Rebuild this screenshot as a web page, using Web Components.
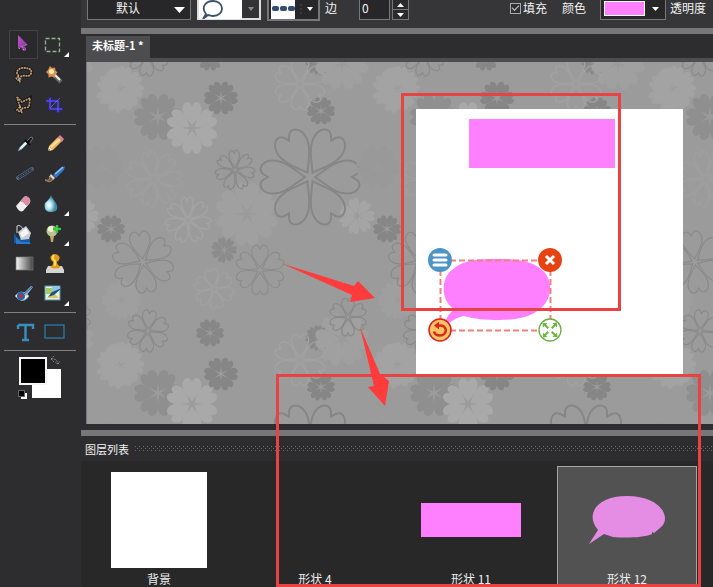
<!DOCTYPE html>
<html lang="zh-CN">
<head>
<meta charset="utf-8">
<title>未标题-1</title>
<style>
html, body { margin: 0; height: 100%; }
body { background: #2d2d2f; color: #f2f2f2; font: 12px/16px "Noto Sans CJK SC", "Noto Sans", sans-serif; overflow: hidden; }
</style>
</head>
<body>
<photo-editor></photo-editor>
<script>
function define(name, html) {
  customElements.define(name, class extends HTMLElement {
    constructor() {
      super();
      this.attachShadow({ mode: 'open' }).innerHTML = html;
    }
  });
}

const icons = {
  move: '<defs><linearGradient id="g" x2="1" y2="1"><stop stop-color="#c05acb"/><stop offset="1" stop-color="#7c2892"/></linearGradient></defs><path d="M4 0v14l3-2 2 4 3-1-2-4 4-1z" fill="url(#g)"/><path d="M5 14l3-3 2 4.500 2-1-2-4 3-1" fill="none" stroke="#d6bdd8" stroke-dasharray="1 1.500"/>',
  marquee: '<rect x="1.500" y="3.500" width="14" height="13" fill="none" stroke="#8fb48b" stroke-width="1.300" stroke-dasharray="4 2"/>',
  lasso: '<path d="M5 11C0 7 5 2 11 3c6 0 8 4 5 7-2 2-6 0-8 1-3 1 0 3-3 4-3 0-4-4 0-3l1 6" fill="none" stroke="#1d1611" stroke-width="3.500"/><path d="M5 11C0 7 5 2 11 3c6 0 8 4 5 7-2 2-6 0-8 1-3 1 0 3-3 4-3 0-4-4 0-3l1 6" fill="none" stroke="#b99c80" stroke-width="1.800" stroke-dasharray="2 .6"/>',
  wand: '<path d="M9 9l8 8" stroke="#666" stroke-width="4.500"/><path d="M9 8l7 7" stroke="#eee" stroke-width="2"/><path d="M6 1l2 2 3-.5.500 3 2 2-2 2-1 3-3-1-3 1v-3L2 7l2-2z" fill="#d8914c"/><circle cx="7.500" cy="6.500" r="2.500" fill="#ffe7ae"/>',
  poly: '<path d="M3 2l5 5 8-4-1 9-6 1-3 4-3-2 3-3zM6 11l2 7" fill="none" stroke="#1d1611" stroke-width="3.500"/><path d="M3 2l5 5 8-4-1 9-6 1-3 4-3-2 3-3zM6 11l2 7" fill="none" stroke="#bb9d82" stroke-width="1.700" stroke-dasharray="2 .8"/>',
  crop: '<path d="M6 2v12h13M2 6h12v12" fill="none" stroke="#3028be" stroke-width="2.500"/><path d="M6 3v11h12M2 6h12v11M16 3L6 13" fill="none" stroke="#6f69ee" stroke-width=".8"/>',
  dropper: '<path d="M4 17l2-4 6-6 2 2-6 6z" fill="#e9f5fd" stroke="#527b93" stroke-width=".7"/><path d="M12 8l5-5 2 1-4 6z" fill="#111" stroke="#999" stroke-width=".7"/><path d="M11 6l5 5" stroke="#090909" stroke-width="2"/>',
  pencil: '<path d="M4 17l1-5 9-9 4 4-9 9z" fill="#efb862"/><path d="M7 13l9-8" stroke="#ffe4a0" stroke-width="2"/><path d="M14 3l2-2 4 4-2 3z" fill="#df8294"/><path d="M4 17l1-4 3 3z" fill="#fff1d4"/><path d="M4 17l1-2 1 1z" fill="#111"/>',
  line: '<path d="M4 14l14-9" stroke="#526580" stroke-width="4" stroke-linecap="round"/><path d="M4 14l14-9" stroke="#1b2736" stroke-width="2.400"/><path d="M4 14l14-9" stroke="#aab6c7" stroke-width=".7" stroke-dasharray="1 1"/>',
  brush: '<path d="M9 11l8-7 4-2-1 4-8 8z" fill="#3374c8"/><path d="M11 10l8-7" stroke="#91c7fa" stroke-width="1.500"/><path d="M7 10l4 4-2 2-4-3z" fill="#ddd"/><path d="M1 16q5 1 5-4l3 3q-2 5-8 1" fill="#7d573d" stroke="#cfb08f" stroke-width=".6"/>',
  eraser: '<path d="M2 12l8-9q2-2 5 1l1 2q1 1-1 4l-6 7q-4 2-7-5" fill="#eee"/><path d="M6 8l4-5q3-2 6 2 1 2-1 5l-2 2z" fill="#d890a5"/><path d="M6 8q4 0 6 5" stroke="#fff" fill="none"/>',
  drop: '<defs><radialGradient id="g" cx=".35" cy=".6"><stop stop-color="#fff"/><stop offset=".45" stop-color="#b8e5f1"/><stop offset="1" stop-color="#3c8cab"/></radialGradient></defs><path d="M7 1q1 3 5 8 4 9-5 9-8 0-6-9 5-4 6-8" fill="url(#g)"/>',
  bucket: '<path d="M0 9l4 6 12-1v5H0z" fill="#1458ac"/><path d="M4 8l8-6 5 7-2 6-8 1z" fill="#c8cdd1"/><path d="M6 9l6-5 3 5-7 5z" fill="#f5f5f5"/><path d="M3 9V2q4-2 6 4" fill="none" stroke="#d3d8dd"/><path d="M2 13l5 5h8l2 2H2z" fill="#2879c7"/>',
  dodge: '<circle cx="8" cy="7" r="5.500" fill="#b9c492"/><circle cx="7" cy="5" r="3" fill="#f2f2cf"/><path d="M6 12h4l-1 6H7z" fill="#c8a868"/><path d="M13 1v8M9 5h8" stroke="#18a431" stroke-width="2.500"/><path d="M13 1v8M9 5h8" stroke="#54e858"/>',
  gradient: '<defs><linearGradient id="g"><stop stop-color="#f5f5f5"/><stop offset="1" stop-color="#444"/></linearGradient></defs><rect x="2" y="3" width="17" height="13" fill="url(#g)" stroke="#777" stroke-width=".7"/>',
  stamp: '<path d="M2 16l2-4h14l2 4v3H2z" fill="#d5d5d5"/><path d="M6 13q4-2 3-5-4-4-2-6 4-4 8 0 2 3-2 6 0 3 4 5-5 3-11 0" fill="#e39a17"/><path d="M10 1q-3 3 1 6v5" fill="none" stroke="#ffdb63" stroke-width="2"/>',
  redeye: '<path d="M1 12q6-8 14 0-6 9-14 0" fill="#edf3f6" stroke="#7ba2bf"/><circle cx="7" cy="12" r="4" fill="#1d65ad"/><circle cx="7" cy="12" r="2" fill="#d22626"/><path d="M9 10l8-8 2 1-7 9z" fill="#8db0d8"/><path d="M9 11l9-8" stroke="#355f95"/>',
  effect: '<rect x="1" y="2" width="15" height="14" fill="#e9f0dc" stroke="#4d95bf"/><path d="M2 4h7v6H2z" fill="#a9cb63"/><path d="M8 3h7v4H8z" fill="#8cc6e9"/><path d="M3 14l8-4 4 4z" fill="#e4c45d"/><path d="M4 13l4-5 10-4-8 7z" fill="#185583"/>',
  text: '<path d="M4 3h15v4M4 7V3M11.500 3v15M8 18h7" fill="none" stroke="#3b8fbe" stroke-width="2.400"/>',
  rect: '<rect x="1" y="3" width="19" height="13" fill="none" stroke="#277da8" stroke-width="1.300"/>'
};

customElements.define('tool-button', class extends HTMLElement {
  connectedCallback() {
    const root = this.attachShadow({ mode: 'open' });
    root.innerHTML = `<style>
:host { display: block; position: relative; width: 29px; height: 29px; }
button { display: grid; place-items: center; width: 100%; height: 100%; padding: 1px 0 0 1px; border: 1px solid transparent; background: none; }
:host([active]) button { border-color: #424244; background: #2a2a2c; }
svg { width: 21px; height: 20px; }
:host([more])::after { content: ""; position: absolute; right: -1px; bottom: 2px; border-style: solid; border-width: 0 0 5px 5px; border-color: transparent transparent #fff; }
</style><button aria-label="${this.getAttribute('label')}"><svg viewBox="0 0 21 20">${icons[this.getAttribute('icon')]}</svg></button>`;
  }
});

define('color-swatches', `<style>
:host { display: block; position: relative; width: 44px; height: 44px; margin: 4px 0 0 14px; }
button { position: absolute; padding: 0; }
.back { left: 14px; top: 14px; width: 29px; height: 29px; border: 0; background: #fff; }
.front { left: 1px; top: 2px; width: 28px; height: 28px; box-sizing: border-box; border: 2px solid #f5f5f5; background: #000; }
.swap { right: 1px; top: 1px; width: 12px; height: 12px; border: 0; background: none; }
.swap svg { display: block; }
.reset { left: 3px; bottom: 0; width: 6px; height: 6px; border: 0; background: #fff; }
.reset::before { content: ""; position: absolute; left: -3px; top: -3px; width: 5px; height: 5px; background: #000; border: 1px solid #666; }
</style>
<button class="back" aria-label="背景色"></button><button class="front" aria-label="前景色"></button>
<button class="swap" aria-label="交换颜色"><svg viewBox="0 0 12 12"><path d="M2 3q6-1 7 5M2 3l3-3M2 3l3 3M9 8L6 6M9 8l2-3" fill="none" stroke="#888" stroke-dasharray="2 1"/></svg></button>
<button class="reset" aria-label="重置颜色"></button>`);

const tool = (icon, label, extra = '') => `<tool-button icon="${icon}" label="${label}" ${extra}></tool-button>`;
define('tool-box', `<style>
:host { display: block; padding: 30px 5px 0 4px; background: #2d2d2f; }
.tools { display: grid; grid-template-columns: 29px 29px; gap: 1px; padding-left: 5px; }
.tools:first-of-type { padding-bottom: 1px; }
hr { margin: 4px 0; border: 0; border-top: 1px solid #818183; }
</style>
<div class="tools">
${tool('move','移动','active')}${tool('marquee','选框','more')}${tool('lasso','套索')}${tool('wand','魔棒')}${tool('poly','多边形套索')}${tool('crop','裁剪')}
</div><hr><div class="tools">
${tool('dropper','吸管')}${tool('pencil','铅笔')}${tool('line','直线')}${tool('brush','画笔')}${tool('eraser','橡皮擦')}${tool('drop','模糊','more')}${tool('bucket','油漆桶')}${tool('dodge','减淡','more')}${tool('gradient','渐变')}${tool('stamp','图章')}${tool('redeye','红眼')}${tool('effect','特效','more')}
</div><hr><div class="tools">${tool('text','文字')}${tool('rect','形状')}</div><hr>
<color-swatches></color-swatches>`);

define('options-bar', `<style>
:host { display: flex; align-items: flex-start; height: 28px; padding-left: 6px; background: #363638; white-space: nowrap; overflow: hidden; }
select, input, button { font: inherit; color: inherit; box-sizing: border-box; margin: 0; border-radius: 0; }
.box { display: flex; flex: none; height: 20px; padding: 0; border: 1px solid #77777a; border-top: 0; background: #272729; }
.pick { position: relative; flex: none; width: 104px; }
select { appearance: none; width: 100%; height: 20px; padding: 0 0 3px 28px; border: 1px solid #77777a; border-top: 0; background: #272729; }
.pick svg { position: absolute; right: 6px; top: 7px; pointer-events: none; }
.shape { width: 64px; margin-left: 6px; border: 2px solid #ddd; border-top: 0; background: #333335; }
.shape svg, .dash svg, .tint svg { display: block; flex: none; }
.dash { width: 53px; height: 21px; margin-left: 6px; padding-left: 2px; border-width: 0 2px 2px; }
label { line-height: 16px; }
.edge { margin-left: 5px; }
.num { width: 31px; margin-left: 22px; padding: 0 0 4px 2px; outline: 0; }
.spin { display: grid; width: 17px; margin-left: 2px; }
.spin button { display: grid; place-items: center; height: 10px; padding: 0; border: 1px solid #77777a; border-top: 0; background: #2b2b2d; }
.fill { display: flex; align-items: center; gap: 2px; margin-left: 101px; }
.fill input { appearance: none; display: grid; place-items: center; width: 11px; height: 11px; border: 1px solid #aaa; background: #303032; }
.fill input:checked::after { content: ""; width: 6px; height: 3px; border: solid #ccc; border-width: 0 0 1px 1px; rotate: -45deg; margin-top: -2px; }
.colour { margin-left: 15px; }
.tint { width: 66px; margin-left: 14px; }
.alpha { margin-left: 4px; }
</style>
<div class="pick"><select aria-label="样式"><option>默认</option></select><svg width="11" height="6"><path d="M0 0h11L5.500 6z" fill="#fff"/></svg></div>
<button class="box shape" aria-label="形状"><svg width="60" height="19"><rect width="43" height="19" fill="#fff"/><path d="M4 19l3-5C1 6 8 1 14 1c12 0 12 15 0 15-2 0-4-1-5-1z" fill="none" stroke="#3a506c" stroke-width="1.800"/><path d="M49 7h6l-3 4z" fill="#888"/></svg></button>
<button class="box dash" aria-label="线型"><svg width="47" height="19"><rect width="24" height="19" fill="#fff"/><g fill="#344d6c"><rect x="1" y="6" width="7" height="5" rx="2"/><rect x="9" y="6" width="7" height="5" rx="2"/><rect x="17" y="6" width="7" height="5" rx="2"/></g><path d="M30 4v10" stroke="#3f5068" stroke-dasharray="2"/><path d="M36 7h6l-3 4z" fill="#fff"/></svg></button>
<label class="edge" for="edge">边</label><input class="box num" id="edge" value="0">
<div class="spin"><button aria-label="增加"><svg width="7" height="4"><path d="M0 4h7L3.500 0z" fill="#fff"/></svg></button><button aria-label="减少"><svg width="7" height="4"><path d="M0 0h7L3.500 4z" fill="#fff"/></svg></button></div>
<label class="fill"><input type="checkbox" checked>填充</label>
<label class="colour" for="tint">颜色</label>
<button class="box tint" id="tint"><svg width="64" height="19"><rect x="3.500" y="1.500" width="40" height="14" fill="#ff80ff" stroke="#fff"/><path d="M51 7h7l-3.500 4z" fill="#fff"/></svg></button>
<span class="alpha">透明度</span>`);

define('document-tab', `<style>
:host { display: flex; align-items: flex-end; height: 24px; margin-left: 5px; border-bottom: 4px solid #4d4d4f; }
button { height: 22px; padding: 0 6px 4px; border: 0; background: #4d4d4f; color: #fff; font: bold 11px/16px "Noto Sans CJK SC", sans-serif; }
</style><button><slot></slot></button>`);

// Heart-shaped petal along +x, narrowed when a flower has many petals.
const petalPath = (n, kind) => {
  const k = (n > 6 ? .8 : 1) * (kind === 'fill' ? 1.1 : 1), v = y => (y * k).toFixed(3);
  return `M.1 0C.28 ${v(-.12)} .5 ${v(-.33)} .74 ${v(-.33)}C.94 ${v(-.33)} 1.060 ${v(-.17)} .94 ${v(-.06)}L.84 0L.94 ${v(.06)}C1.060 ${v(.17)} .94 ${v(.33)} .74 ${v(.33)}C.5 ${v(.33)} .28 ${v(.12)} .1 0Z`;
};
// x, y, radius, petals, rotation, kind, colour
const flowers = [
  [35,26,22,8,10,'fill','#a3a3a3'], [71,55,24,6,0,'fill','#8f8f8f'], [105,66,26,6,30,'fill','#a9a9a9'],
  [134,36,17,6,0,'fill','#868686'], [234,49,14,6,0,'fill','#868686'], [24,167,14,6,0,'fill','#878787'],
  [123,271,14,6,0,'fill','#878787'], [231,276,13,8,0,'fill','#898989'], [137,188,13,7,0,'fill','#8c8c8c'],
  [35,238,20,8,0,'fill','#9f9f9f'], [160,152,32,6,30,'fill','#a0a0a0'], [270,154,18,7,0,'fill','#a5a5a5'],
  [308,28,23,7,0,'fill','#a2a2a2'], [255,277,27,6,0,'fill','#a0a0a0'], [15,105,22,6,0,'fill','#999999'],
  [223,115,50,6,0,'line','#868686'], [56,200,31,6,22,'line','#8a8a8a'], [148,108,20,7,10,'line','#888888'],
  [61,269,21,6,35,'line','#8a8a8a'], [173,208,25,6,30,'line','#8c8c8c'], [261,255,19,6,30,'line','#8a8a8a'],
  [101,158,23,7,10,'line','#a4a4a4'], [213,22,26,6,30,'line','#a2a2a2'], [127,227,20,6,20,'line','#a1a1a1'],
  [67,117,28,7,0,'line','#9f9f9f']
];
const flowerMarkup = flowers.map(([x, y, r, n, turn, kind, colour]) => {
  let out = `<g transform="translate(${x} ${y}) scale(${r})" ${kind === 'fill' ? `fill="${colour}"` : `fill="none" stroke="${colour}" stroke-width="${(r > 40 ? 2 : 1.2) / r}"`}>`;
  for (let i = 0; i < n; i++) out += `<path d="${petalPath(n, kind)}" transform="rotate(${turn + i * 360 / n})"/>`;
  return out + '</g>';
}).join('');
let tiles = '';
for (const dx of [-276, 0, 276]) for (const dy of [-276, 0, 276]) tiles += `<g transform="translate(${dx} ${dy})">${flowerMarkup}</g>`;

const expandArrow = '<path d="M115.500 76h5l-1.500 1.500 3 3-1.500 1.500-3-3-1.500 1.500z" transform="';
define('shape-selection', `<style>
:host { position: absolute; left: 11px; top: 138px; display: block; }
svg { display: block; }
</style>
<svg width="136" height="96" role="img" aria-label="形状 12">
<path d="M27 62C13 53 14 31 25 23 35 13 51 12 70 12s34 1 45 11c11 9 10 26 2 35-9 11-25 15-45 15-14 0-24-1-35-4-7 1-14 6-20 11 1-8 5-13 10-18z" fill="#ff80ff"/>
<path d="M14 13.500h108M13.500 14v68M123.500 14v68M14 83.500h108" fill="none" stroke="#f08080" stroke-width="2" stroke-dasharray="6 3"/>
<circle cx="13" cy="13" r="12" fill="#4b94c5"/><path d="M7 8h12M7 13h12M7 18h12" stroke="#fff" stroke-width="3" stroke-linecap="round"/>
<circle cx="123" cy="13" r="12" fill="#e54412"/><path d="M119 9l8 8m0-8l-8 8" stroke="#fff" stroke-width="3"/>
<circle cx="13" cy="83" r="11" fill="#ffc564" stroke="#d92019" stroke-width="1.500"/><path d="M10 78.500h4c7 1 6 10-1 10q-5 0-6-4" fill="none" stroke="#dc2718" stroke-width="2.500"/><path d="M7 78.500l5-4v8z" fill="#dc2718"/>
<circle cx="123" cy="83" r="11" fill="#fff" stroke="#6cad41" stroke-width="1.300"/>
<g fill="#6cb53e">${[0, 90, 180, 270].map(a => expandArrow + `rotate(${a} 123 83)"/>`).join('')}</g>
</svg>`);

define('work-space', `<style>
:host { display: block; position: relative; flex: 1; min-height: 0; margin-left: 5px; border-left: 1px solid #777; background: #9b9b9b; overflow: hidden; }
.paper { position: absolute; inset: 0; width: 100%; height: 100%; }
.artboard { position: relative; width: 267px; height: 265px; margin: 47px 30px 0 auto; background: #fff; }
.block { position: absolute; left: 53px; top: 10px; width: 146px; height: 49px; background: #ff80ff; }
</style>
<svg class="paper" aria-hidden="true"><defs><pattern id="p" width="276" height="276" patternUnits="userSpaceOnUse">${tiles}</pattern></defs><rect width="100%" height="100%" fill="url(#p)"/></svg>
<div class="artboard"><div class="block"></div><shape-selection></shape-selection></div>`);

define('layer-item', `<style>
:host { display: block; flex: none; width: 140px; }
button { display: flex; flex-direction: column; align-items: center; gap: 3px; box-sizing: border-box; width: 100%; height: 140px; padding: 5px 0 0; border: 1px solid transparent; background: none; color: #eee; font: inherit; }
:host([selected]) button { border-color: #a5a5a5; background: #525252; }
.thumb { display: grid; place-items: center; height: 96px; }
</style><button><span class="thumb"><slot name="thumb"></slot></span><span><slot></slot></span></button>`);

define('layer-panel', `<style>
:host { display: block; flex: none; background: #2d2d30; }
header { display: flex; align-items: center; gap: 6px; height: 25px; padding-left: 4px; font-size: 11px; }
.grip { display: block; flex: 1; height: 6px; }
.list { display: flex; gap: 16px; height: 121px; padding: 5px 0 0 8px; background: #282828; overflow: hidden; }
svg { display: block; }
</style>
<header><span>图层列表</span><svg class="grip" aria-hidden="true"><defs><pattern id="d" width="4" height="4" patternUnits="userSpaceOnUse"><path d="M0 0h1v1H0zM2 2h1v1H2z" fill="#68686a"/></pattern></defs><rect width="100%" height="100%" fill="url(#d)"/></svg></header>
<div class="list">
<layer-item><svg slot="thumb" width="96" height="96"><rect width="96" height="96" fill="#fff"/></svg>背景</layer-item>
<layer-item>形状 4</layer-item>
<layer-item><svg slot="thumb" width="100" height="34"><rect width="100" height="34" fill="#ff80ff"/></svg>形状 11</layer-item>
<layer-item selected><svg slot="thumb" width="78" height="54"><path d="M10 37C-3 22 8 3 39 3c36 0 45 24 33 32l-6 5-2-1v2c-9 4-28 4-39 3l-9-3-15 10z" fill="#e58de5"/></svg>形状 12</layer-item>
</div>`);

define('red-marks', `<style>
:host { position: absolute; inset: 0; pointer-events: none; }
svg { display: block; width: 100%; height: 100%; }
</style><svg aria-hidden="true">
<g fill="none" stroke="#e94242" stroke-width="3"><path d="M402.500 94.500h217v215h-217zM277.500 375.500h422v210h-422z"/></g>
<g fill="#ff3b3b"><path d="M282 263.500L354 286l4-5 17 17-25 4 2-7z"/><path d="M360 327l20 47 9 7-4 25-17-19 6-1z"/></g></svg>`);

define('photo-editor', `<style>
:host { display: grid; grid-template-columns: 81px minmax(0, 1fr); position: relative; height: 100vh; overflow: hidden; }
main { display: flex; flex-direction: column; min-height: 0; background: #2d2d2f; }
.bar { flex: none; height: 6px; background: #777; }
.low { margin-top: 6px; }
options-bar, document-tab { flex: none; }
</style>
<tool-box></tool-box>
<main><options-bar></options-bar><div class="bar"></div><document-tab>未标题-1 *</document-tab><work-space></work-space><div class="bar low"></div><layer-panel></layer-panel></main>
<red-marks></red-marks>`);
</script>
</body>
</html>
